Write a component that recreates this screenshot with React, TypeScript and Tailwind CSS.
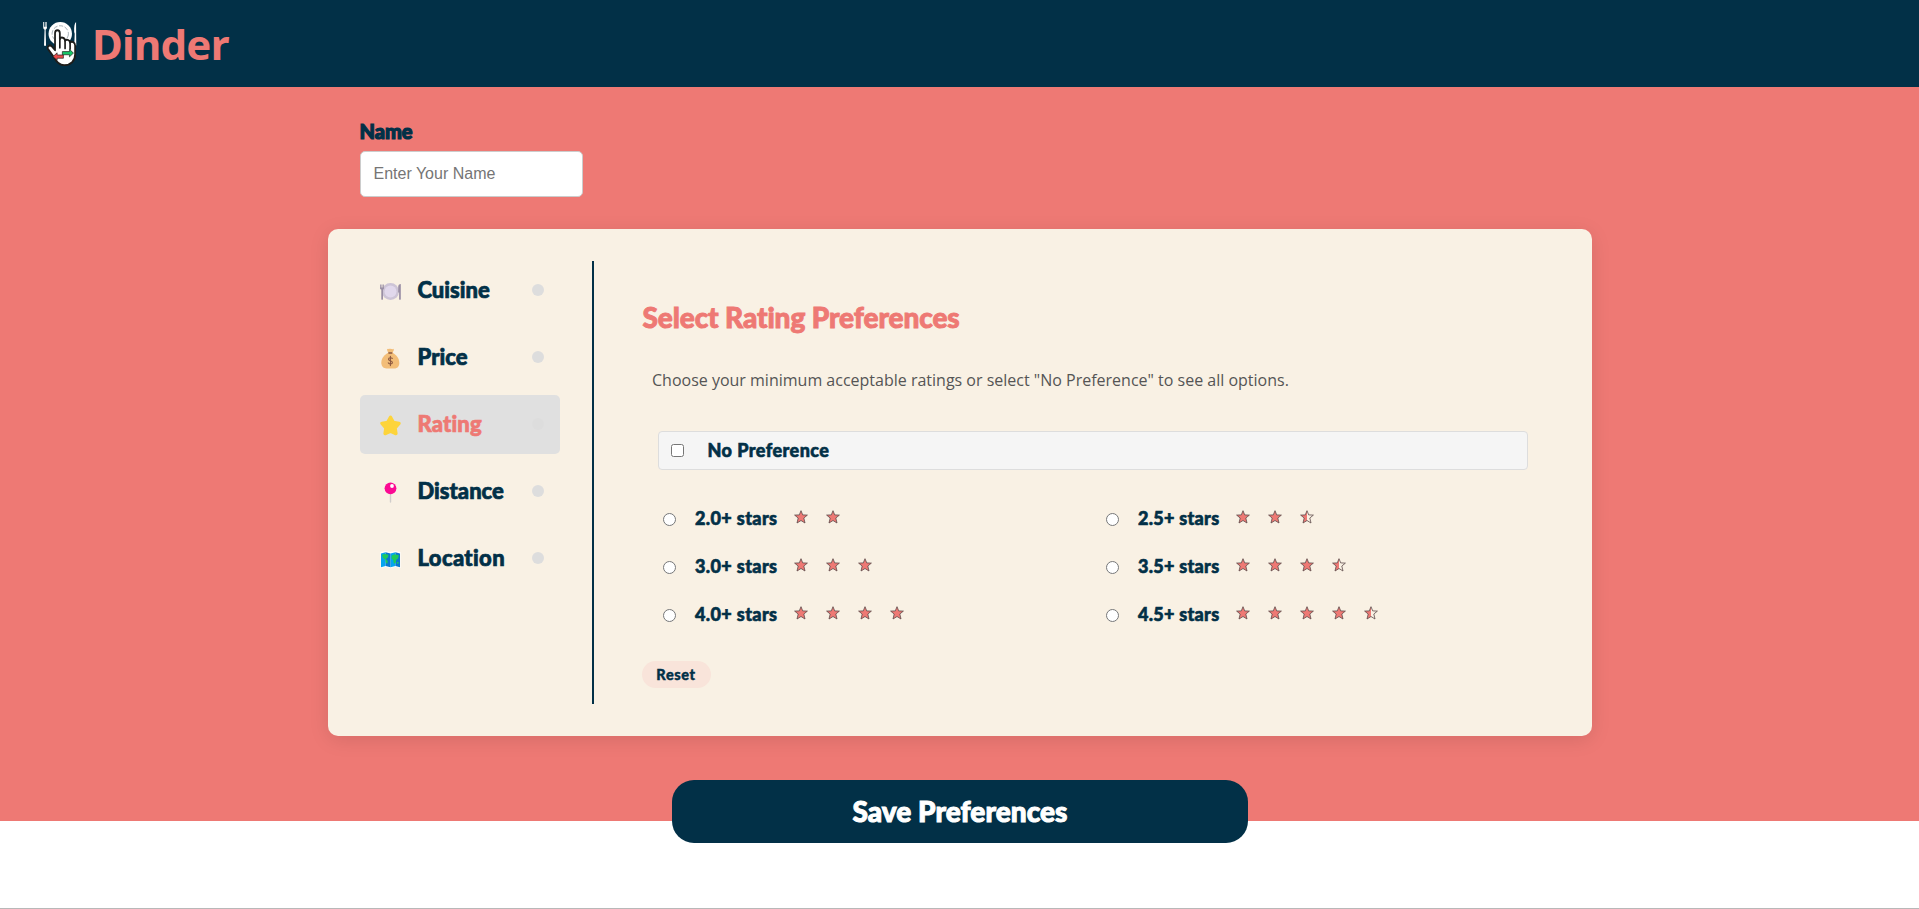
import type { ReactNode } from "react";

function Logo() {
  return (
    <svg className="h-[44px] w-[34px]" viewBox="1 1 32.5 37.5" preserveAspectRatio="none">
      <g fill="#fff">
        <path d="M1.200 1v4.500c0 1.200.6 1.800 1.300 2L2 20.500a.9.900 0 0 0 1.900 0L3.500 7.500C4.300 7.300 4.800 6.600 4.800 5.500V1h-.6v4h-.7V1h-.8v4H2V1Z" />
        <path d="M32.600 1c-1.500 1-2 4-1.800 8.500l.5 1.500-.4 9.500a.9.900 0 0 0 1.900 0Z" />
        <ellipse cx="17.500" cy="11" rx="11.200" ry="10" />
      </g>
      <ellipse cx="17.500" cy="11" rx="7.800" ry="6.800" fill="none" stroke="#9aa5ab" strokeWidth="0.800" strokeDasharray="4 1.500" />
      <path
        d="M12.500 23.500V10.500c0-3.400 4.600-3.400 4.600 0V15.500c1-2 4.800-1.500 5 1.500 1-1.500 4.500-1 4.800 1.500 1.500-1.300 4.800-.3 4.800 2.500v7.500c0 5.500-4 9.300-10.500 9.300-5 0-7.500-2.800-9.500-6.500L5.700 24c-1-2.600 2-4 3.700-2.200l3.100 3.200Z"
        fill="#fff"
        stroke="#1d1d1b"
        strokeWidth="1.700"
        strokeLinejoin="round"
      />
      <path d="M17.100 15v8M22.100 17V23.500M26.900 18.500v5.500" stroke="#1d1d1b" strokeWidth="1.600" strokeLinecap="round" />
      <path d="M19.500 26.200h6.800v-1.900l3.800 3.200-3.800 3.200v-1.800h-6.800Z" fill="#16c767" stroke="#1d1d1b" strokeWidth="0.600" />
      <path d="M20.500 31.900h-6v1.800L10.500 30.500l4-3.200v1.800h6Z" fill="#ea4b4b" stroke="#1d1d1b" strokeWidth="0.600" />
    </svg>
  );
}

function PlateIcon() {
  return (
    <svg className="h-[21px] w-[21px]" viewBox="0 0 21 21">
      <circle cx="10.500" cy="10.500" r="8.500" fill="#cdc4d6" />
      <circle cx="10.500" cy="10.500" r="6" fill="#e1d8ec" />
      <path d="M0 3.500h.8v3h.7v-3h1v3h.7v-3H4V7c0 1-.6 1.500-1 1.600V18a.8.800 0 0 1-1.700 0V8.600C.600 8.400 0 8 0 7ZM20.800 3v15a.8.800 0 0 1-1.700 0v-6.500h-.9V6c0-2 1-3 2.600-3Z" fill="#998ea4" />
    </svg>
  );
}

function MoneyIcon() {
  return (
    <svg className="h-[21px] w-[21px]" viewBox="0 0 21 21">
      <path d="M7 .8c1 .8 1.500 0 3.200 0s2.500.8 3.500 0c.5 1.700-.7 3-1.200 4.200H8.300C8 3.800 6.800 2.500 7 .8Z" fill="#f2bd78" />
      <path d="M8.300 4.800c-3.800 2-7 5.200-7 10 0 3.800 2.500 5.700 5 5.700h8c3 0 5-2.200 5-5.500 0-5-3.300-8.200-6.800-10.200Z" fill="#f2bd78" />
      <rect x="8.200" y="4.200" width="4.300" height="1.500" rx=".7" fill="#8b5840" />
      <path d="M12.300 10.500c-.4-1-3.800-1.200-3.800.7 0 2 3.900 1 3.900 3.200 0 2-3.700 1.800-4.100.5M10.400 8.300v9.300" fill="none" stroke="#8b5840" strokeWidth="1.100" strokeLinecap="round" />
    </svg>
  );
}

function GoldStarIcon() {
  return (
    <svg className="h-[21px] w-[21px]" viewBox="0 0 21 21">
      <path d="M10.500 2.300 13.300 7.300l5.700 1.100-3.900 4.500.8 5.700-5.400-2.300-5.400 2.300.8-5.700L2 8.400 7.700 7.300Z" fill="#fdd43b" stroke="#fdd43b" strokeWidth="3.400" strokeLinejoin="round" />
    </svg>
  );
}

function PinIcon() {
  return (
    <svg className="h-[21px] w-[21px]" viewBox="0 0 21 21">
      <path d="M10.500 11v9" stroke="#d0cdcb" strokeWidth="1.400" strokeLinecap="round" />
      <circle cx="10.500" cy="6.300" r="5.900" fill="#fb0a93" />
      <circle cx="12" cy="4" r="1.900" fill="#fff" />
    </svg>
  );
}

function MapIcon() {
  return (
    <svg className="h-[21px] w-[21px]" viewBox="0 0 21 21">
      <path d="m.5 3 5-1.100 5 1.100 5-1.100 5 1.100v16l-5-1.100-5 1.100-5-1.100-5 1.100Z" fill="#fff" />
      <path d="m1 4.500 4.600-1.300v13.800l-4.600 1.300ZM10.500 4.500l4.900-1.300v13.800l-4.900 1.300Z" fill="#04a5ef" />
      <path d="m5.600 3.200 4.900 1.300v13.800l-4.900-1.300ZM15.400 3.200l4.600 1.300v13.800l-4.600-1.300Z" fill="#0a78d0" />
      <path d="M2 5.800 5 5l3.600.7-.7 2.700-2 1.500 1.900 2-.5 3-1.500-1.300-.5-3L3 9ZM11.700 6.500l3-1.300 4.200 1-.9 3.300-1.700 1.200-.8 3.500-1.600.4-.7-3.500-1.700-1.600ZM17 13l1.800.2-.5 1.600-1.400-.3Z" fill="#1dca5c" />
    </svg>
  );
}

const categories: { label: string; icon: ReactNode; text: string }[] = [
  { label: "Cuisine", icon: <PlateIcon />, text: "tracking-[0.01px]" },
  { label: "Price", icon: <MoneyIcon />, text: "tracking-[0.01px]" },
  { label: "Rating", icon: <GoldStarIcon />, text: "tracking-[0.150px]" },
  { label: "Distance", icon: <PinIcon />, text: "tracking-[0.01px]" },
  { label: "Location", icon: <MapIcon />, text: "tracking-[0.350px]" },
];

const ratings = [2, 2.5, 3, 3.5, 4, 4.5];

const starPath = "M7 .7 8.700 4.900 13.400 5.100 9.800 8 11 13 7 10.500 3 13 4.200 8 .600 5.100 5.300 4.900Z";

function Star({ half = false }: { half?: boolean }) {
  return (
    <svg className="h-[14px] w-[14px] shrink-0" viewBox="0 0 14 14">
      {half ? <path d="M7 .7V10.500L3 13 4.200 8 .600 5.100 5.300 4.900Z" fill="#ee7974" /> : <path d={starPath} fill="#ee7974" />}
      <path d={starPath} fill="none" stroke="#5d4a4a" strokeWidth="0.800" />
    </svg>
  );
}

export default function App() {
  return (
    <div className="flex h-[909px] flex-col overflow-hidden border-b border-[#b8b8b8] bg-white font-['Lato',sans-serif] text-[#023047]">
      <header className="flex h-[87px] shrink-0 items-center bg-[#023047] pl-[43px]">
        <Logo />
        <h1 className="ml-[15px] pt-[1px] font-['Noto_Sans','Open_Sans',sans-serif] text-[42px] leading-none font-bold tracking-[-0.700px] text-[#ee7974]">Dinder</h1>
      </header>
      <main className="flex h-[734px] shrink-0 flex-col items-center bg-[#ee7974]">
        <div className="flex w-[1264px] flex-col items-start pt-[32px] pl-[32px]">
          <label className="h-[32px] text-[20px] leading-[24px] font-black [-webkit-text-stroke:1.200px_#023047]">Name</label>
          <input
            className="h-[46px] w-[223px] rounded-[5px] border border-[#ccc] bg-white px-[13px] font-['Liberation_Sans',sans-serif] text-[16px] placeholder:text-[#757575]"
            placeholder="Enter Your Name"
          />
        </div>
        <section className="mt-[32px] flex h-[507px] w-[1264px] shrink-0 rounded-[10px] bg-[#f9f1e4] p-[32px] shadow-[0_4px_20px_rgba(0,0,0,0.100)]">
          <nav className="flex w-[234px] shrink-0 flex-col gap-[8px] border-r-2 border-[#023047] pr-[32px]">
            {categories.map((c) => {
              const active = c.label === "Rating";
              return (
                <button key={c.label} className={`flex h-[59px] shrink-0 items-center rounded-[5px] pr-[16px] pb-[1px] pl-[20px] ${active ? "bg-[#e0e0e0] text-[#ee7974]" : ""}`}>
                  <span className="pt-[2px]">{c.icon}</span>
                  <span className={`ml-[17px] text-[22px] leading-[28px] font-black [-webkit-text-stroke:0.700px_currentColor] ${c.text}`}>{c.label}</span>
                  <span className="ml-auto size-[12px] rounded-full bg-[#dddddd]" />
                </button>
              );
            })}
          </nav>
          <div className="flex min-w-0 flex-1 flex-col items-start pt-[38px] pl-[48px]">
            <h2 className="pl-[1px] text-[28px] leading-[36px] font-black tracking-[-0.100px] text-[#ee7974] [-webkit-text-stroke:0.900px_currentColor]">Select Rating Preferences</h2>
            <p className="mt-[33px] pl-[10.500px] font-['Open_Sans',sans-serif] text-[16px] leading-[24px] text-[#555]">
              Choose your minimum acceptable ratings or select "No Preference" to see all options.
            </p>
            <label className="mt-[39px] ml-[16px] flex h-[39px] w-[870px] items-center rounded-[4px] border border-[#ddd] bg-[#f5f5f5] pl-[12px]">
              <input type="checkbox" className="size-[13px]" />
              <span className="mb-[2px] ml-[24px] text-[18px] leading-[24px] font-black tracking-[0.450px] [-webkit-text-stroke:0.600px_currentColor]">No Preference</span>
            </label>
            <div className="mt-[25px] ml-[21px] grid grid-cols-[443px_443px] auto-rows-[48px]">
              {ratings.map((r) => (
                <label key={r} className="flex items-center">
                  <input type="radio" name="rating" className="mt-[1px] size-[13px]" />
                  <span className={`mb-[2px] ml-[19.500px] text-[18px] leading-[24px] font-black whitespace-nowrap [-webkit-text-stroke:0.600px_currentColor] ${r % 1 ? "w-[80.500px] tracking-[0.280px]" : "w-[81.500px] tracking-[0.380px]"}`}>{r.toFixed(1)}+ stars</span>
                  <span className="mb-[4px] ml-[17px] flex gap-[18px]">
                    {Array.from({ length: Math.floor(r) }, (_, i) => (
                      <Star key={i} />
                    ))}
                    {r % 1 ? <Star half /> : null}
                  </span>
                </label>
              ))}
            </div>
            <button className="mt-[22px] h-[27px] w-[69px] rounded-full bg-[#f9e4da] text-[14.500px] font-black tracking-[0.600px] [-webkit-text-stroke:0.400px_currentColor]">Reset</button>
          </div>
        </section>
        <button className="mt-[44px] h-[63px] w-[576px] shrink-0 rounded-[22px] bg-[#023047] pb-[2px] pl-[1px] text-[28px] font-black tracking-[0.050px] text-white [-webkit-text-stroke:1px_currentColor]">Save Preferences</button>
      </main>
    </div>
  );
}
